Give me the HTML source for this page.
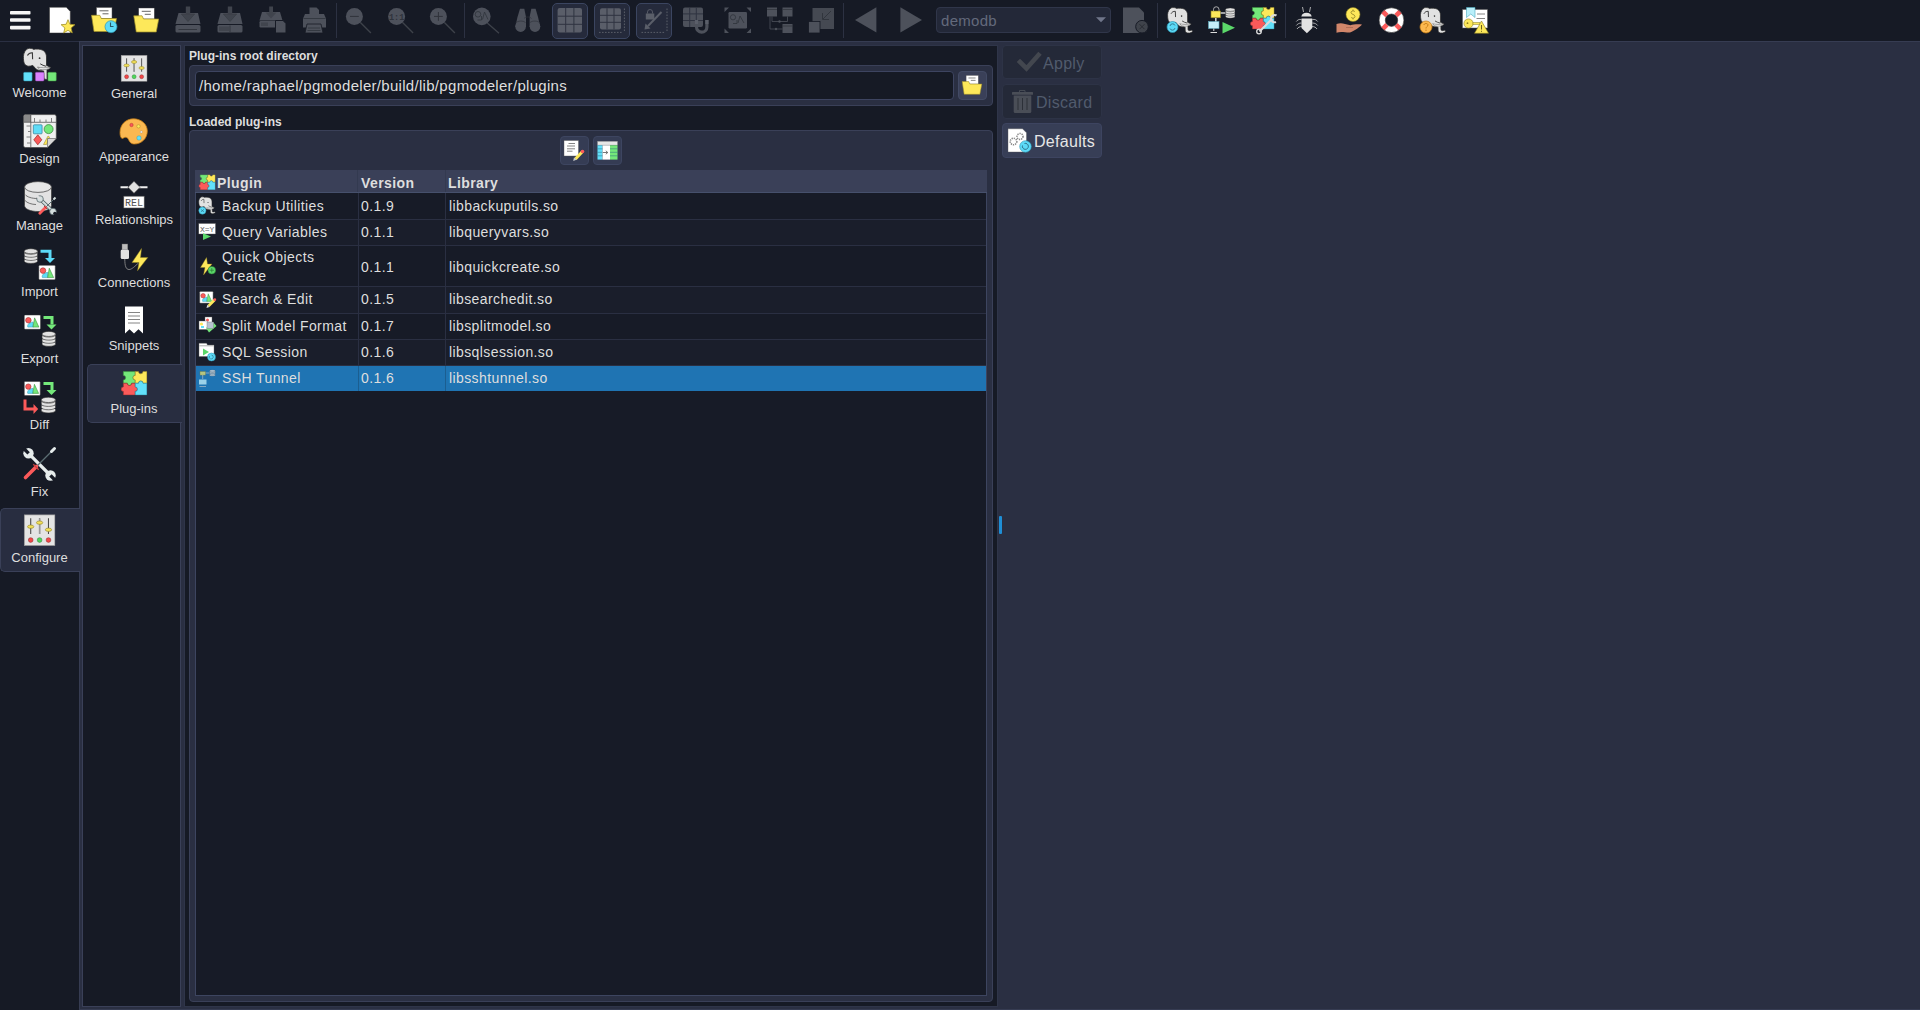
<!DOCTYPE html>
<html><head><meta charset="utf-8">
<style>
*{margin:0;padding:0;box-sizing:border-box}
html,body{width:1920px;height:1010px;overflow:hidden;background:#2a2f42;font-family:"Liberation Sans",sans-serif;color:#dedede}
.a{position:absolute}
#tb{left:0;top:0;width:1920px;height:41px;background:#161a25}
#tbline{left:79px;top:41px;width:1841px;height:1px;background:#363c52}
#side{left:0;top:42px;width:79px;height:968px;background:#161a25}
#fl{left:79px;top:41px;width:1px;height:969px;background:#363c52}
#fb{left:79px;top:1009px;width:1841px;height:1px;background:#363c52}
.sep{width:1px;top:3px;height:35px;background:#2c3142}
.tbtn{top:3px;width:36px;height:36px;border:1px solid #3b4560;border-radius:5px;background:#252a3b}
.panel{background:#161a25;border:1px solid #3a4058}
.lbl{position:absolute;font-size:13px;white-space:nowrap;text-align:center;line-height:14px}
.bold{font-weight:bold;font-size:12px;white-space:nowrap;position:absolute;line-height:14px}
.sel{background:#282d40;border:1px solid #3a4058}
.row{position:absolute;left:196px;width:790px;height:26px}
.cell{position:absolute;font-size:14px;white-space:nowrap;line-height:16px;letter-spacing:0.4px}
svg{position:absolute;overflow:visible}
</style></head><body>
<div id="tb" class="a"></div>
<div id="tbline" class="a"></div>
<div id="side" class="a"></div>
<div id="fl" class="a"></div>
<div id="fb" class="a"></div>

<!-- toolbar separators -->
<div class="a sep" style="left:336px"></div>
<div class="a sep" style="left:464px"></div>
<div class="a sep" style="left:843px"></div>
<div class="a sep" style="left:1157px"></div>
<div class="a sep" style="left:1285px"></div>
<div class="a tbtn" style="left:552px"></div>
<div class="a tbtn" style="left:594px"></div>
<div class="a tbtn" style="left:636px"></div>

<!-- combo -->
<div class="a" style="left:936px;top:7px;width:175px;height:26px;border:1px solid #30364a;border-radius:4px;background:#232838"></div>
<div class="a" style="left:941px;top:12px;font-size:15px;line-height:17px;color:#636a7c;letter-spacing:0.3px">demodb</div>

<!-- sidebar selected -->
<div class="a sel" style="left:0;top:508px;width:80px;height:64px;border-right:none;border-radius:5px 0 0 5px"></div>

<!-- category panel -->
<div class="a panel" style="left:82px;top:45px;width:99px;height:962px"></div>
<div class="a sel" style="left:87px;top:364px;width:95px;height:59px;border-right:none;border-radius:5px 0 0 5px"></div>

<!-- main panel -->
<div class="a panel" style="left:184px;top:45px;width:814px;height:962px;border-color:#2f3549"></div>

<!-- sidebar labels -->
<div class="lbl" style="left:0;width:79px;top:86px">Welcome</div>
<div class="lbl" style="left:0;width:79px;top:152px">Design</div>
<div class="lbl" style="left:0;width:79px;top:219px">Manage</div>
<div class="lbl" style="left:0;width:79px;top:285px">Import</div>
<div class="lbl" style="left:0;width:79px;top:352px">Export</div>
<div class="lbl" style="left:0;width:79px;top:418px">Diff</div>
<div class="lbl" style="left:0;width:79px;top:485px">Fix</div>
<div class="lbl" style="left:0;width:79px;top:551px">Configure</div>

<!-- category labels -->
<div class="lbl" style="left:83px;width:102px;top:87px">General</div>
<div class="lbl" style="left:83px;width:102px;top:150px">Appearance</div>
<div class="lbl" style="left:83px;width:102px;top:213px">Relationships</div>
<div class="lbl" style="left:83px;width:102px;top:276px">Connections</div>
<div class="lbl" style="left:83px;width:102px;top:339px">Snippets</div>
<div class="lbl" style="left:83px;width:102px;top:402px">Plug-ins</div>

<div class="bold" style="left:189px;top:49px">Plug-ins root directory</div>
<div class="bold" style="left:189px;top:115px">Loaded plug-ins</div>

<!-- root dir group -->
<div class="a" style="left:189px;top:65px;width:804px;height:41px;background:#2a2f42;border:1px solid #3a4058;border-radius:4px"></div>
<div class="a" style="left:195px;top:71px;width:759px;height:29px;background:#161a25;border:1px solid #3d4460;border-radius:4px"></div>
<div class="cell" style="left:199px;top:78px;font-size:15px;letter-spacing:0.3px">/home/raphael/pgmodeler/build/lib/pgmodeler/plugins</div>
<div class="a" style="left:958px;top:71px;width:29px;height:29px;background:#3a4058;border:1px solid #424a64;border-radius:4px"></div>

<!-- loaded plugins group -->
<div class="a" style="left:189px;top:130px;width:804px;height:872px;background:#2a2f42;border:1px solid #3a4058;border-radius:4px"></div>
<div class="a" style="left:560px;top:136px;width:29px;height:29px;background:#353c54;border:1px solid #3d4560;border-radius:4px"></div>
<div class="a" style="left:593px;top:136px;width:29px;height:29px;background:#353c54;border:1px solid #3d4560;border-radius:4px"></div>

<!-- table -->
<div class="a" style="left:195px;top:170px;width:792px;height:826px;background:#171b27;border:1px solid #3d4560;border-top:none"></div>
<div class="a" style="left:195px;top:170px;width:792px;height:23px;background:#3a4058;border-bottom:1px solid #46506c"></div>
<div class="a" style="left:357px;top:170px;width:1px;height:22px;background:#333a50"></div>
<div class="a" style="left:445px;top:170px;width:1px;height:22px;background:#333a50"></div>
<div class="cell" style="left:217px;top:175px;font-weight:bold">Plugin</div>
<div class="cell" style="left:361px;top:175px;font-weight:bold">Version</div>
<div class="cell" style="left:448px;top:175px;font-weight:bold">Library</div>

<div class="a" style="left:196px;top:193px;width:790px;height:26px;background:#171b27"></div>
<div class="a" style="left:196px;top:219px;width:790px;height:1px;background:#2a2f42"></div>
<div class="a" style="left:196px;top:220px;width:790px;height:25px;background:#1a1e2b"></div>
<div class="a" style="left:196px;top:245px;width:790px;height:1px;background:#2a2f42"></div>
<div class="a" style="left:196px;top:246px;width:790px;height:40px;background:#171b27"></div>
<div class="a" style="left:196px;top:286px;width:790px;height:1px;background:#2a2f42"></div>
<div class="a" style="left:196px;top:287px;width:790px;height:26px;background:#1a1e2b"></div>
<div class="a" style="left:196px;top:313px;width:790px;height:1px;background:#2a2f42"></div>
<div class="a" style="left:196px;top:314px;width:790px;height:25px;background:#171b27"></div>
<div class="a" style="left:196px;top:339px;width:790px;height:1px;background:#2a2f42"></div>
<div class="a" style="left:196px;top:340px;width:790px;height:25px;background:#1a1e2b"></div>
<div class="a" style="left:196px;top:365px;width:790px;height:1px;background:#2a2f42"></div>
<div class="a" style="left:196px;top:366px;width:790px;height:25px;background:#1f74b3"></div>
<div class="a" style="left:358px;top:193px;width:1px;height:172px;background:#2a2f42"></div>
<div class="a" style="left:445px;top:193px;width:1px;height:172px;background:#2a2f42"></div>
<div class="a" style="left:358px;top:366px;width:1px;height:25px;background:#1b5e90"></div>
<div class="a" style="left:445px;top:366px;width:1px;height:25px;background:#1b5e90"></div>

<div class="cell" style="left:222px;top:198px">Backup Utilities</div>
<div class="cell" style="left:361px;top:198px">0.1.9</div>
<div class="cell" style="left:449px;top:198px">libbackuputils.so</div>
<div class="cell" style="left:222px;top:224px">Query Variables</div>
<div class="cell" style="left:361px;top:224px">0.1.1</div>
<div class="cell" style="left:449px;top:224px">libqueryvars.so</div>
<div class="cell" style="left:222px;top:249px">Quick Objects</div>
<div class="cell" style="left:222px;top:268px">Create</div>
<div class="cell" style="left:361px;top:259px">0.1.1</div>
<div class="cell" style="left:449px;top:259px">libquickcreate.so</div>
<div class="cell" style="left:222px;top:291px">Search &amp; Edit</div>
<div class="cell" style="left:361px;top:291px">0.1.5</div>
<div class="cell" style="left:449px;top:291px">libsearchedit.so</div>
<div class="cell" style="left:222px;top:318px">Split Model Format</div>
<div class="cell" style="left:361px;top:318px">0.1.7</div>
<div class="cell" style="left:449px;top:318px">libsplitmodel.so</div>
<div class="cell" style="left:222px;top:344px">SQL Session</div>
<div class="cell" style="left:361px;top:344px">0.1.6</div>
<div class="cell" style="left:449px;top:344px">libsqlsession.so</div>
<div class="cell" style="left:222px;top:370px">SSH Tunnel</div>
<div class="cell" style="left:361px;top:370px">0.1.6</div>
<div class="cell" style="left:449px;top:370px">libsshtunnel.so</div>

<div class="a" style="left:999px;top:516px;width:3px;height:18px;background:#1f8fd6;border-radius:1px"></div>
<!-- right buttons -->
<div class="a" style="left:1002px;top:45px;width:100px;height:34px;background:#242938;border:1px solid #2d3346;border-radius:4px"></div>
<div class="a" style="left:1043px;top:55px;font-size:16px;line-height:18px;color:#515b6d;letter-spacing:0.3px">Apply</div>
<div class="a" style="left:1002px;top:84px;width:100px;height:35px;background:#242938;border:1px solid #2d3346;border-radius:4px"></div>
<div class="a" style="left:1036px;top:94px;font-size:16px;line-height:18px;color:#515b6d;letter-spacing:0.3px">Discard</div>
<div class="a" style="left:1002px;top:123px;width:100px;height:35px;background:#373e56;border:1px solid #3d4460;border-radius:4px"></div>
<div class="a" style="left:1034px;top:133px;font-size:16px;line-height:18px;color:#e6e6e6;letter-spacing:0.3px">Defaults</div>
<svg id="ov" style="position:absolute;left:0;top:0" width="1920" height="1010" viewBox="0 0 1920 1010">
<defs>
<symbol id="puzzle" viewBox="4.6 5 27.1 24.7">
<path d="M7.3,5.4H19.4V9.3A2.3,2.3 0 0 0 19.4,13.9V17.3H15.8A2.3,2.3 0 0 1 11.2,17.3H7.3V13.9A2.3,2.3 0 0 0 7.3,9.3Z" fill="#74e87a" stroke="#3a8f3c" stroke-width="0.6"/>
<path d="M19.4,5.4H22.7A2.3,2.3 0 0 0 27.3,5.4H31.3V17.3H27.3A2.3,2.3 0 0 0 22.7,17.3H19.4V13.9A2.3,2.3 0 0 1 19.4,9.3Z" fill="#fde85a" stroke="#9c8d2a" stroke-width="0.6"/>
<path d="M7.3,17.3H11.2A2.3,2.3 0 0 0 15.8,17.3H19.4V21A2.3,2.3 0 0 1 19.4,25.6V29.3H7.3V25.6A2.3,2.3 0 0 1 7.3,21Z" fill="#fb5a5a" stroke="#9c3030" stroke-width="0.6"/>
<path d="M19.4,17.3H22.7A2.3,2.3 0 0 1 27.3,17.3H31.3V29.3H19.4V25.6A2.3,2.3 0 0 0 19.4,21Z" fill="#62e0fa" stroke="#2f8ea5" stroke-width="0.6"/>
</symbol>
<symbol id="sliders" viewBox="0 0 32 32">
<rect x="0.5" y="0.5" width="31" height="31" fill="#e4e4e4" stroke="#9a9a9a" stroke-width="0.8"/>
<path d="M7,4V20M16,4V20M25,4V20" stroke="#4a4a4a" stroke-width="1.1"/>
<path d="M16,4V20" stroke="#9a9a9a" stroke-width="1.6"/>
<ellipse cx="7" cy="12.5" rx="3.2" ry="1.7" fill="#f2e05a" stroke="#8e7f22" stroke-width="0.6"/>
<ellipse cx="16" cy="8.4" rx="3.2" ry="1.7" fill="#f2e05a" stroke="#8e7f22" stroke-width="0.6"/>
<ellipse cx="25" cy="15.6" rx="3.2" ry="1.7" fill="#f2e05a" stroke="#8e7f22" stroke-width="0.6"/>
<circle cx="7" cy="26" r="2.4" fill="#f04848" stroke="#8a2525" stroke-width="0.5"/>
<circle cx="16" cy="26" r="2.4" fill="#4fd65a" stroke="#2a7a30" stroke-width="0.5"/>
<circle cx="25" cy="26" r="2.4" fill="#f04848" stroke="#8a2525" stroke-width="0.5"/>
</symbol>
<symbol id="eleph" viewBox="0 0 44 44">
<path d="M5.4,12.6C5.5,9 7.5,5.5 10,4.6C12,4 14.5,4.5 15.7,5.4C18,4.8 22.5,5 25,6.3C27.5,7.8 28.5,10.5 28.5,13V21.4L32.7,23.4C31.5,25 30,25.5 29,25.6V35.7L26.1,34.9L25.7,27C24,27 22.5,26.8 21.8,26.6C20,26.3 18.5,25.5 17.5,24.5L14.8,21.4C13,22 11.5,22.3 10.5,22.2C8.5,22 7,21 6.2,19.2C5.6,17.5 5.4,15 5.4,12.6Z" fill="#e2e2e2" stroke="#2a2a2a" stroke-width="0.8"/>
<path d="M9.4,11.5C10.5,9.5 12,8.5 14.4,8.7L14.6,15.3" fill="none" stroke="#3a3a3a" stroke-width="1.1"/>
<circle cx="21.6" cy="14.2" r="0.9" fill="#333"/>
<path d="M22.2,19.8C24,21 26,21.8 28.2,22.3" fill="none" stroke="#3a3a3a" stroke-width="1"/>
<path d="M19.5,23C23,24.2 28,24 32.7,23.4C30.5,25.6 26,26.3 21.5,25.3Z" fill="#ffffff" stroke="#3a3a3a" stroke-width="0.5"/>
</symbol>
<symbol id="eleph2" viewBox="0 0 44 44">
<path d="M5.4,12.6C5.5,9 7.5,5.5 10,4.6C12,4 14.5,4.5 15.7,5.4C18,4.8 22.5,5 25,6.3C27.5,7.8 28.5,10.5 28.5,13V21.4L32.7,23.4C31.5,25 30,25.5 29,25.6V29.5C29,31 30.5,31.5 33,30.5L34.5,31.5C33,34 29,34.5 26.8,33C25.8,32 25.7,30.5 25.7,27C24,27 22.5,26.8 21.8,26.6C20,26.3 18.5,25.5 17.5,24.5L14.8,21.4C13,22 11.5,22.3 10.5,22.2C8.5,22 7,21 6.2,19.2C5.6,17.5 5.4,15 5.4,12.6Z" fill="#e2e2e2" stroke="#2a2a2a" stroke-width="0.8"/>
<path d="M9.4,11.5C10.5,9.5 12,8.5 14.4,8.7L14.6,15.3" fill="none" stroke="#3a3a3a" stroke-width="1.1"/>
<circle cx="21.6" cy="14.2" r="0.9" fill="#333"/>
<path d="M22.2,19.8C24,21 26,21.8 28.2,22.3" fill="none" stroke="#3a3a3a" stroke-width="1"/>
<path d="M19.5,23C23,24.2 28,24 32.7,23.4C30.5,25.6 26,26.3 21.5,25.3Z" fill="#ffffff" stroke="#3a3a3a" stroke-width="0.5"/>
</symbol>
<symbol id="db" viewBox="0 0 16 17">
<g fill="#e2e2e2" stroke="#3a3a3a" stroke-width="0.7">
<path d="M0.8,12.5V14C0.8,15.5 4,16.5 8,16.5S15.2,15.5 15.2,14V12.5"/>
<path d="M0.8,9V10.8C0.8,12.3 4,13.3 8,13.3S15.2,12.3 15.2,10.8V9"/>
<path d="M0.8,5.5V7.4C0.8,8.9 4,9.9 8,9.9S15.2,8.9 15.2,7.4V5.5"/>
<path d="M0.8,3.3V4.1C0.8,5.6 4,6.6 8,6.6S15.2,5.6 15.2,4.1V3.3"/>
<ellipse cx="8" cy="3.3" rx="7.2" ry="2.7"/>
</g>
</symbol>
<symbol id="pic" viewBox="0 0 18 16">
<rect x="0.5" y="0.5" width="17" height="15" rx="1" fill="#ffffff" stroke="#444" stroke-width="0.6"/>
<path d="M9.8,7.8V13.2H4.2C3.6,12.2 4,10.5 5.5,9.3C6.8,8.3 8.5,7.9 9.8,7.8Z" fill="#5fdcf7" stroke="#2f8ea5" stroke-width="0.5"/>
<circle cx="4.8" cy="6" r="2.9" fill="#fb5a5a" stroke="#9c2e2e" stroke-width="0.6"/>
<path d="M11.3,3.5L15.8,13.2H9.6Z" fill="#74e87a" stroke="#3a8f3c" stroke-width="0.6" stroke-linejoin="round"/>
</symbol>
<symbol id="folder" viewBox="0 0 26 26">
<rect x="5.5" y="0.5" width="15.5" height="11" fill="#fff" stroke="#555" stroke-width="0.5"/>
<path d="M8.5,3.8H17.5M11.5,6.8H17.5" stroke="#666" stroke-width="1"/>
<path d="M0.5,8.3H8.8L10.3,11.5H25.5L23,24.5H3Z" fill="#fde85a" stroke="#9c8d2a" stroke-width="0.7"/>
</symbol>
</defs>

<rect x="10" y="11" width="20.5" height="3.6" rx="0.8" fill="#f6f6f6"/>
<rect x="10" y="18.2" width="20.5" height="3.6" rx="0.8" fill="#f6f6f6"/>
<rect x="10" y="25.8" width="20.5" height="3.6" rx="0.8" fill="#f6f6f6"/>
<path d="M49.5,7.3H66.3L70.3,11.5V33H49.5Z" fill="#ffffff" stroke="#333" stroke-width="0.5"/>
<polygon points="68.0,19.7 69.9,24.3 74.9,24.7 71.1,28.0 72.3,32.9 68.0,30.3 63.7,32.9 64.9,28.0 61.1,24.7 66.1,24.3" fill="#fde85a" stroke="#a39227" stroke-width="0.8"/>
<use href="#folder" x="91" y="7" width="26" height="26"/>
<circle cx="111" cy="26.7" r="6" fill="#5cdaf7" stroke="#2c93b0" stroke-width="0.7"/><path d="M110.5,22.5V26.5H113.5" fill="none" stroke="#2a5a6a" stroke-width="1.1"/>
<use href="#folder" x="133" y="7.5" width="26.5" height="26"/>
<path d="M178.5,13H198.0L200.5,24H175.5Z" fill="#4d515b"/>
<rect x="175.5" y="25" width="25" height="7.6" rx="1.5" fill="#4d515b"/>
<rect x="185.8" y="6.5" width="4.4" height="8" fill="#40444d"/>
<path d="M181.3,14H194.7L188.0,21.5Z" fill="#40444d" stroke="#363a42" stroke-width="0.6"/>
<path d="M178.5,29.5H197" stroke="#2f333b" stroke-width="0.9"/>
<path d="M220.5,13H240.0L242.5,24H217.5Z" fill="#4d515b"/>
<rect x="217.5" y="25" width="25" height="7.6" rx="1.5" fill="#4d515b"/>
<rect x="227.8" y="6.5" width="4.4" height="8" fill="#40444d"/>
<path d="M223.3,14H236.7L230.0,21.5Z" fill="#40444d" stroke="#363a42" stroke-width="0.6"/>
<rect x="219" y="26.5" width="10" height="4.5" fill="#41454e"/><path d="M230,25.5V32" stroke="#2f333b" stroke-width="0.9"/>
<path d="M262,12H280L282.5,20.5H259.5Z" fill="#4d515b"/><rect x="259.5" y="21" width="23" height="6.5" rx="1.2" fill="#4d515b"/>
<rect x="269.2" y="6.5" width="3.8" height="7" fill="#40444d"/><path d="M265.5,12.5H276.5L271,18.5Z" fill="#40444d"/>
<rect x="261" y="22.5" width="7" height="3.5" fill="#41454e"/>
<path d="M275.5,20.5H283L286,23.5V33H275.5Z" fill="#4d515b" stroke="#161a25" stroke-width="1"/>
<path d="M309.5,7.5H316.5L319,10V14.5H309.5Z" fill="#4d515b"/><path d="M305,14H324L326,18.5V27.5H303V18.5Z" fill="#4d515b"/><path d="M307,24H321L323,33H305Z" fill="#4d515b" stroke="#161a25" stroke-width="0.8"/>
<path d="M303.5,18.5H325.5M308,28H320M307.5,30.5H320.5" stroke="#2f333b" stroke-width="0.8"/>
<path d="M360.4,22.5L370.9,33" stroke="#3e424a" stroke-width="1.3"/>
<circle cx="354.4" cy="16.4" r="8.5" fill="#4d515b"/>
<path d="M350,16.4H358.8" stroke="#2f333b" stroke-width="1"/>
<path d="M402.6,22.5L413.1,33" stroke="#3e424a" stroke-width="1.3"/>
<circle cx="396.6" cy="16.4" r="8.5" fill="#4d515b"/>
<text x="396.6" y="19.8" font-family="Liberation Mono" font-weight="bold" font-size="8.5" text-anchor="middle" fill="#2f333b">1:1</text>
<path d="M444.4,22.5L454.9,33" stroke="#3e424a" stroke-width="1.3"/>
<circle cx="438.4" cy="16.4" r="8.5" fill="#4d515b"/>
<path d="M434,16.4H442.8M438.4,12V20.8" stroke="#2f333b" stroke-width="1"/>
<path d="M487,22.8L499,33.3" stroke="#3e424a" stroke-width="1.3"/><circle cx="481.8" cy="16.4" r="8.8" fill="#4d515b"/>
<circle cx="478" cy="14.3" r="2.8" fill="none" stroke="#2f333b" stroke-width="0.8"/><path d="M477.5,20H481.5V16M482.5,19.5L484.5,12L488,19.5" fill="none" stroke="#2f333b" stroke-width="0.8"/>
<path d="M520,8.7H524.3L526,17V27H515.3L517.5,17Z" fill="#4d515b"/><path d="M531.3,8.7H535.6L538,17L540.3,27H529.6V17Z" fill="#4d515b"/>
<circle cx="520.6" cy="26.6" r="5.3" fill="#4d515b"/><circle cx="535" cy="26.6" r="5.3" fill="#4d515b"/><path d="M515.5,23C518,20.5 523,20.5 525.5,22.5M530,22.5C532.5,20.5 537.5,20.5 540,23M524,18.5C525.5,16.5 530,16.5 531.5,18.5" fill="none" stroke="#30343c" stroke-width="0.7"/>
<rect x="557.6" y="8" width="24.4" height="24.5" rx="2" fill="#5a5e69"/>
<path d="M565.7,8V32.5M557.6,16.2H582.0" stroke="#2f3340" stroke-width="1"/>
<path d="M573.9,8V32.5M557.6,24.3H582.0" stroke="#2f3340" stroke-width="1"/>
<rect x="600" y="8.2" width="21" height="21.2" rx="2" fill="#5a5e69"/>
<path d="M607.0,8.2V29.4M600,15.3H621" stroke="#2f3340" stroke-width="1"/>
<path d="M614.0,8.2V29.4M600,22.3H621" stroke="#2f3340" stroke-width="1"/>
<path d="M599,32.4H622.5M624.4,8.5V31" stroke="#5a5e69" stroke-width="1" stroke-dasharray="1.6,1.4"/>
<path d="M641.5,32.4H665M667,8.5V31" stroke="#5a5e69" stroke-width="1" stroke-dasharray="1.6,1.4"/>
<path d="M647.5,13.5V12A2.5,2.5 0 0 1 652.5,12V13.5" fill="none" stroke="#5a5e69" stroke-width="0.9"/><rect x="645.8" y="13.5" width="8.5" height="6" fill="#5a5e69"/>
<path d="M661.5,12L648,26" stroke="#5a5e69" stroke-width="2"/><path d="M644.5,29.5L645.5,23.5L650.5,28.5Z" fill="#5a5e69"/>
<rect x="683" y="7.4" width="20" height="19.6" rx="2" fill="#4d515b"/>
<path d="M689.7,7.4V27.0M683,13.9H703" stroke="#2f3340" stroke-width="1"/>
<path d="M696.3,7.4V27.0M683,20.5H703" stroke="#2f3340" stroke-width="1"/>
<path d="M696.5,20V27A5.2,5.2 0 0 0 706.9,27V20" fill="none" stroke="#4d515b" stroke-width="3.2"/><path d="M696.5,20V24M706.9,20V24" stroke="#5a5e69" stroke-width="3.2"/>
<rect x="728.5" y="12" width="18.5" height="16.5" rx="1.2" fill="#4d515b"/><circle cx="733" cy="17.3" r="2.6" fill="none" stroke="#2f333b" stroke-width="0.8"/><path d="M733,23.5H737V20M738,23L740,16L744,23" fill="none" stroke="#2f333b" stroke-width="0.8"/>
<path d="M724.5,7.5H729L724.5,12Z M751,7.5H746.5L751,12Z M724.5,33H729L724.5,28.5Z M751,33H746.5L751,28.5Z" fill="#4d515b"/>
<rect x="767" y="7.5" width="10" height="9" fill="#4d515b"/><rect x="782.5" y="7.5" width="10" height="9" fill="#4d515b"/><rect x="782.5" y="24" width="10" height="9" fill="#4d515b"/>
<path d="M767,9.5H777M782.5,9.5H792.5M782.5,26H792.5" stroke="#2f333b" stroke-width="0.7"/><path d="M772,16.5V21.5H787.5V16.5M770,16.5V29H782.5" fill="none" stroke="#4d515b" stroke-width="0.8"/><circle cx="779.5" cy="21.5" r="1.2" fill="#4d515b"/><circle cx="776" cy="29" r="1.2" fill="#4d515b"/>
<rect x="812.5" y="8" width="21.5" height="21" fill="#454952"/><rect x="808.5" y="21.5" width="11.5" height="11.5" fill="#4d515b" stroke="#161a25" stroke-width="0.8"/><path d="M831,11L823,19M822.5,13V19.5H829" fill="none" stroke="#2f333b" stroke-width="0.9"/>
<polygon points="876.4,7.2 876.4,32.6 855,19.9" fill="#4d515b"/><polygon points="900.4,7.2 900.4,32.6 922,19.9" fill="#4d515b"/>
<polygon points="1096,17.2 1106,17.2 1101,22.3" fill="#70768a"/>
<path d="M1123,7.5H1139L1144,12.5V33H1123Z" fill="#4d515b"/><circle cx="1142" cy="26.7" r="6.3" fill="#3f434b" stroke="#161a25" stroke-width="1"/><path d="M1139.5,24.2L1144.5,29.2M1144.5,24.2L1139.5,29.2" stroke="#262930" stroke-width="0.9"/>
<use href="#eleph2" x="1162.9" y="3.8" width="38.1" height="38.1"/>
<circle cx="1172.5" cy="27" r="5.5" fill="#5cdaf7" stroke="#2c93b0" stroke-width="0.7"/><path d="M1170,26A2.6,2.6 0 0 1 1175,25.5M1175,28A2.6,2.6 0 0 1 1170,28.5" fill="none" stroke="#2a6a80" stroke-width="0.8"/>
<path d="M1213.5,11V9.5A2.7,2.7 0 0 1 1219,9.5V11" fill="none" stroke="#bbb" stroke-width="0.9"/><rect x="1211" y="11" width="9.5" height="6.8" fill="#fde85a" stroke="#8a7c22" stroke-width="0.6"/>
<path d="M1220.5,13H1225.5M1215.8,18V22" stroke="#cfcfcf" stroke-width="1.6"/>
<use href="#db" x="1225" y="7.5" width="10.5" height="11"/>
<rect x="1208.5" y="21.5" width="10.5" height="7" fill="#c5f0fb" stroke="#5aa9bd" stroke-width="0.6"/><path d="M1213.8,28.5V31M1210.5,32.5H1217" stroke="#dcdcdc" stroke-width="1"/>
<polygon points="1222.5,22 1222.5,33.5 1235,27.7" fill="#5bd86a"/>
<use href="#puzzle" x="1250" y="7" width="24.5" height="22.5"/>
<path d="M1259.5,31.5L1272,19" stroke="#dcdcdc" stroke-width="2.2"/><circle cx="1259" cy="31.5" r="2.3" fill="none" stroke="#dcdcdc" stroke-width="1.3"/><path d="M1276.5,15.5A3.6,3.6 0 1 0 1276,22" fill="none" stroke="#dcdcdc" stroke-width="2.2"/>
<path d="M1302.5,7L1303.5,12M1310.5,7L1309.5,12" stroke="#cfcfcf" stroke-width="0.8"/>
<path d="M1301.3,16.5A5.3,4.5 0 0 1 1311.7,16.5Z" fill="#e2e2e2"/>
<path d="M1301.5,18.5H1312.3V28L1306.9,33.3L1301.5,28Z" fill="#e2e2e2"/>
<path d="M1301.5,19.5C1299,19 1297.5,20 1296.3,21.5M1301.5,23C1299,23 1297.5,24 1296.3,25.5M1302,26.5C1299.5,26.5 1298,27.5 1297,29M1312.3,19.5C1315,19 1316.5,20 1317.7,21.5M1312.3,23C1315,23 1316.5,24 1317.7,25.5M1311.8,26.5C1314.5,26.5 1316,27.5 1317,29" fill="none" stroke="#cfcfcf" stroke-width="0.8"/>
<circle cx="1353" cy="14.5" r="7" fill="#fde85a" stroke="#8a7c22" stroke-width="0.6"/><path d="M1354.8,11.5C1353.5,10.5 1351,10.8 1351,12.7C1351,14.5 1355,14.2 1355,16.5C1355,18.3 1352.5,18.6 1351.2,17.5M1353,9.5V10.8M1353,18.2V19.5" fill="none" stroke="#8a7c22" stroke-width="0.8"/>
<path d="M1336.5,24C1339,23 1342,22.8 1345,24L1350.5,25.3C1353,24.5 1357,24 1362,24.5C1360,27 1355,30.5 1350,32.5C1346,32.8 1341,31 1336.5,32.8Z" fill="#d1866a"/>
<path d="M1346,27.5H1353" stroke="#a86850" stroke-width="0.8"/>
<circle cx="1391.5" cy="20.2" r="9.3" fill="none" stroke="#ffffff" stroke-width="6.2"/>
<path d="M1396.0,24.7L1400.2,28.9M1387.0,24.7L1382.8,28.9M1387.0,15.7L1382.8,11.5M1396.0,15.7L1400.2,11.5" stroke="#fb5a5a" stroke-width="4.6"/>
<circle cx="1391.5" cy="20.2" r="12.4" fill="none" stroke="#2e2e2e" stroke-width="0.6"/><circle cx="1391.5" cy="20.2" r="6.2" fill="none" stroke="#2e2e2e" stroke-width="0.6"/>
<use href="#eleph2" x="1415.8" y="3.8" width="38.1" height="38.1"/>
<circle cx="1426" cy="27" r="6" fill="#fcb84e" stroke="#c47d16" stroke-width="0.7"/><path d="M1424,25C1424,23 1428,23 1428,25C1428,26.5 1426,26.5 1426,28.5" fill="none" stroke="#c47d16" stroke-width="1"/><circle cx="1426" cy="30.2" r="0.7" fill="#c47d16"/>
<rect x="1462.5" y="9.5" width="25" height="18.5" fill="#ffffff" stroke="#555" stroke-width="0.5"/>
<path d="M1466.5,7.5H1475V17.5L1470.8,14L1466.5,17.5Z" fill="#b9effa" stroke="#4aaac0" stroke-width="0.6"/>
<path d="M1477,14H1485M1476.5,18.5H1485" stroke="#777" stroke-width="0.9"/>
<circle cx="1468.5" cy="23.5" r="4.6" fill="#fde85a" stroke="#8a7c22" stroke-width="0.6"/><path d="M1473,22.5H1480V24.5H1473Z" fill="#fde85a" stroke="#8a7c22" stroke-width="0.5"/><circle cx="1467.5" cy="23.2" r="0.9" fill="#8a7c22"/>
<path d="M1481.5,21L1488.5,33.3H1474.5Z" fill="#fde85a" stroke="#8a7c22" stroke-width="0.6"/><path d="M1481.5,25V29.5M1481.5,30.8V31.8" stroke="#5a5016" stroke-width="0.9"/>
<use href="#eleph" x="18" y="44" width="44" height="44"/>
<rect x="23.6" y="72.3" width="8.5" height="8.7" rx="1" fill="#62e0fa" stroke="#2f8ea5" stroke-width="0.5"/>
<rect x="35.4" y="72.3" width="8.6" height="8.7" rx="1" fill="#d982fd" stroke="#8f46ab" stroke-width="0.5"/>
<rect x="47.9" y="72.3" width="8.4" height="8.7" rx="1" fill="#74e87a" stroke="#3a8f3c" stroke-width="0.5"/>
<path d="M23.5,116.5A2,2 0 0 1 25.5,114.6H54.3A2,2 0 0 1 56.3,116.5V138.5L47.5,147.6H25.5A2,2 0 0 1 23.5,145.6Z" fill="#f0f0f0" stroke="#444" stroke-width="0.7"/>
<rect x="24" y="115" width="7" height="7" fill="#8a8a8a"/><path d="M30.8,115V147.3M24,122.3H56" stroke="#555" stroke-width="0.8"/>
<path d="M34.5,118V122M40,119.5V122M46,119.5V122M51.5,118V122M26.5,126H30.5M28,131.5H30.5M26.5,137H30.5M27,143H30.5" stroke="#666" stroke-width="0.8"/>
<rect x="33.3" y="124.8" width="8.8" height="9" rx="0.8" fill="#5fdcf7" stroke="#2f7e95" stroke-width="0.7"/>
<circle cx="48.6" cy="129.1" r="4.5" fill="#74e87a" stroke="#2f7e34" stroke-width="0.7"/>
<path d="M37.8,134.8L41.8,139.8L37.8,144.8L33.8,139.8Z" fill="#fb5a5a" stroke="#922" stroke-width="0.7"/>
<path d="M43.5,144.5L48,136L49.5,137L46.5,144.5Z" fill="#fde85a" stroke="#8a7c22" stroke-width="0.5"/>
<path d="M47.5,138.5H56.3L47.5,147.6Z" fill="#d8d8d8" stroke="#555" stroke-width="0.6"/>
<path d="M24.5,187V205.5C24.5,209 30.5,211.5 38,211.5S51.5,209 51.5,205.5V187" fill="#e2e2e2" stroke="#3a3a3a" stroke-width="0.7"/>
<ellipse cx="38" cy="187" rx="13.5" ry="5.4" fill="#e6e6e6" stroke="#3a3a3a" stroke-width="0.7"/>
<path d="M25,194.5C27,197 32,198.5 37,198.5M25,200.5C27,203 32,204.5 36,204.5" fill="none" stroke="#555" stroke-width="0.8"/>
<path d="M41.5,200.5L51.5,210" stroke="#4a5a5e" stroke-width="3.6"/><path d="M41.5,200.5L51.5,210" stroke="#d4dede" stroke-width="2"/>
<circle cx="40" cy="199" r="3.3" fill="#d4dede" stroke="#4a5a5e" stroke-width="0.7"/><path d="M40,199L37,196" stroke="#e2e2e2" stroke-width="2.4"/>
<circle cx="53" cy="211.5" r="3.3" fill="#d4dede" stroke="#4a5a5e" stroke-width="0.7"/><circle cx="54.8" cy="213.3" r="1.6" fill="#161a25"/>
<path d="M54.5,198.5L45,208" stroke="#5b6e73" stroke-width="1"/><path d="M53.5,199.5L55.5,197.5" stroke="#d4dede" stroke-width="2"/>
<path d="M45.5,207.5L39.8,213.3" stroke="#fb5a5a" stroke-width="2.8" stroke-linecap="round"/><path d="M44,206L47,209" stroke="#b83a3a" stroke-width="1"/>
<use href="#db" x="23.5" y="247.8" width="14.8" height="16.4"/>
<path d="M40.5,251.2H50V258" fill="none" stroke="#5cdaf7" stroke-width="3"/><polygon points="45,258 55,258 50,263" fill="#5cdaf7"/>
<use href="#pic" x="38.3" y="264.8" width="17.5" height="15.5"/>
<use href="#pic" x="23.8" y="314.5" width="17.2" height="15.3"/>
<path d="M43.5,317.5H52V324.5" fill="none" stroke="#74e87a" stroke-width="3"/><polygon points="46.5,324.5 56.5,324.5 51.5,329.5" fill="#74e87a"/>
<use href="#db" x="41.3" y="330.6" width="15" height="16.4"/>
<use href="#pic" x="23.5" y="381" width="17.5" height="15"/>
<path d="M43.5,383.5H52V390.5" fill="none" stroke="#74e87a" stroke-width="3"/><polygon points="46.5,390 56.5,390 51.5,395" fill="#74e87a"/>
<path d="M25,399.5V409H35" fill="none" stroke="#fb5a5a" stroke-width="3"/><polygon points="33.5,404 38.2,409 33.5,414" fill="#fb5a5a"/>
<use href="#db" x="40.5" y="396.5" width="15.8" height="17"/>
<path d="M28.5,453.3L50.5,475.5" stroke="#e6ecec" stroke-width="3.2"/>
<circle cx="28.5" cy="453.3" r="5.2" fill="#e6ecec"/><path d="M28.6,453.4L23.5,448.3" stroke="#161a25" stroke-width="3.4"/>
<circle cx="50.5" cy="475.5" r="5.2" fill="#e6ecec"/><path d="M50.4,475.4L55.5,480.5" stroke="#161a25" stroke-width="3.4"/>
<path d="M53,450L36,467" stroke="#5b6e73" stroke-width="1.2"/><path d="M51.5,451.5L54.5,448.5" stroke="#e6ecec" stroke-width="3" stroke-linecap="round"/>
<path d="M36.5,466.5L25.5,477.5" stroke="#fb5a5a" stroke-width="3.6" stroke-linecap="round"/><path d="M33.3,464.3L38.7,469.7" stroke="#c84040" stroke-width="1.3"/>
<use href="#sliders" x="23.8" y="514.3" width="31.6" height="31.7"/>
<use href="#sliders" x="120.7" y="55" width="26.8" height="26.7"/>
<path d="M133.5,118.8C141,118.8 147.3,124 147.3,131C147.3,138.5 141.5,144 134.5,144C130.5,144 129.5,141.5 128.5,139.5C127.5,137.5 125.5,136.5 123.5,138C121.5,139.5 120,137 120,132.5C120,124.5 126,118.8 133.5,118.8Z" fill="#fbb851" stroke="#c47d16" stroke-width="0.8"/>
<circle cx="131.5" cy="125" r="1.7" fill="#fb5a5a" stroke="#922" stroke-width="0.4"/><circle cx="138.5" cy="126.3" r="1.7" fill="#fde85a" stroke="#8a7c22" stroke-width="0.4"/><circle cx="141.3" cy="132" r="1.1" fill="#fff" stroke="#888" stroke-width="0.4"/><circle cx="139" cy="138" r="2.2" fill="#62e0fa" stroke="#2f8ea5" stroke-width="0.4"/>
<path d="M120.5,187.3H128M136,187.3H147.5" stroke="#eee" stroke-width="2" /><path d="M134,181.3L140,187.3L134,193.3L128,187.3Z" fill="#e2e2e2" stroke="#444" stroke-width="0.6"/>
<rect x="123.8" y="196.2" width="20.4" height="11.8" fill="#fff" stroke="#555" stroke-width="0.6"/><text x="134" y="206" font-family="Liberation Mono" font-size="10" text-anchor="middle" fill="#555">REL</text>
<rect x="122" y="244" width="5.8" height="5.5" fill="#bdbdbd" stroke="#666" stroke-width="0.4"/><rect x="120.7" y="249.5" width="8.3" height="9.5" rx="1.5" fill="#e2e2e2"/>
<path d="M124.8,259C124.8,266 126,269.5 129,269.5C132,269.5 135,266 138.5,263" fill="none" stroke="#888" stroke-width="0.9"/>
<polygon points="141.5,248.5 132,262.5 139,262.5 137.5,270.8 147.8,257.5 140.5,257.5" fill="#fde85a" stroke="#8a7c22" stroke-width="0.5"/>
<path d="M125,306.6H143V333.6L138.5,329.3L134,333.6L129.5,329.3L125,333.6Z" fill="#ffffff"/>
<path d="M128,312.5H140M128,316H140M128,319.5H140M128,323H140" stroke="#777" stroke-width="0.9"/>
<use href="#puzzle" x="120.7" y="371" width="26.6" height="24.6"/>
<use href="#folder" x="961.5" y="75" width="21" height="20.5"/>
<rect x="564" y="140.5" width="14.5" height="15.5" fill="#fff" stroke="#555" stroke-width="0.4"/><path d="M568.5,143.5H575M567,146H575M567,148.8H575M567,151.2H572.5" stroke="#666" stroke-width="0.8"/>
<path d="M575.5,159L582.5,151.5" stroke="#fde85a" stroke-width="3"/><circle cx="582.5" cy="151.5" r="1.8" fill="#fb5a5a"/><polygon points="573.2,161 574,157.5 576.5,159.8" fill="#ccc"/>
<rect x="597.5" y="141.3" width="20" height="3.8" fill="#e6e6e6" stroke="#888" stroke-width="0.4"/><rect x="597.5" y="145.3" width="5" height="14.3" fill="#62e0fa"/><rect x="602.5" y="145.3" width="7.5" height="14.3" fill="#fff"/><rect x="610" y="145.3" width="7.5" height="14.3" fill="#74e87a"/>
<path d="M597.5,148.8H602.5M597.5,152.3H602.5M597.5,155.8H602.5M610,148.8H617.5M610,152.3H617.5M610,155.8H617.5" stroke="#2a6a80" stroke-width="0.5"/><path d="M603,152.5H607.5M605.8,150.8L607.8,152.5L605.8,154.2" fill="none" stroke="#555" stroke-width="0.8"/>
<use href="#puzzle" x="198.5" y="174.5" width="17" height="15.5"/>
<use href="#eleph2" x="195.7" y="194.4" width="25.1" height="25.1"/>
<circle cx="202.4" cy="210.6" r="3.6" fill="#5cdaf7" stroke="#2c93b0" stroke-width="0.5"/><path d="M200.8,209.3L204,212M204,209.3L200.8,212" stroke="#2a6a80" stroke-width="0.6"/>
<rect x="198.8" y="223.5" width="16.7" height="10.5" fill="#fff" stroke="#555" stroke-width="0.4"/><text x="207.2" y="232" font-family="Liberation Mono" font-size="8" text-anchor="middle" fill="#666">X=Y</text>
<polygon points="203,233.3 203,240 211,236.6" fill="#5bd86a"/>
<polygon points="206.5,257.5 200.5,267.5 205,267.5 203.5,275 212,264 207.5,264" fill="#fde85a" stroke="#8a7c22" stroke-width="0.4"/>
<circle cx="211.8" cy="270.2" r="3.8" fill="#5bd86a" stroke="#2a7a30" stroke-width="0.5"/><path d="M209.6,270.2H214M211.8,268V272.4" stroke="#2a7a30" stroke-width="0.7"/>
<use href="#pic" x="198.9" y="291" width="15" height="12.6"/>
<path d="M208.5,306L214.5,300" stroke="#fde85a" stroke-width="2.6"/><circle cx="214.8" cy="299.7" r="1.4" fill="#fb5a5a"/><polygon points="206.5,308 207.3,304.8 209.5,307" fill="#ddd"/>
<rect x="205" y="317" width="7" height="9" fill="#fff" stroke="#666" stroke-width="0.4"/><circle cx="207.5" cy="320" r="1.5" fill="#fb5a5a"/>
<rect x="199" y="321" width="8.5" height="8.5" fill="#fff" stroke="#666" stroke-width="0.4"/><circle cx="201.5" cy="324" r="1.6" fill="#fde85a"/><rect x="201" y="326" width="3" height="2" fill="#62e0fa"/>
<path d="M209,332.5L216.5,326L213,322L206,328Z" fill="#74e87a"/><rect x="207" y="322" width="6.5" height="6.5" fill="#b8c2d0" stroke="#777" stroke-width="0.4"/>
<path d="M199,343.3H206.5L207.5,345H214V356.5H199Z" fill="#fff" stroke="#666" stroke-width="0.4"/><path d="M199.3,345.8H213.7" stroke="#999" stroke-width="0.8"/>
<polygon points="203,348.5 203,355.5 209,352" fill="#5bd86a"/>
<circle cx="211.5" cy="357" r="4" fill="#5cdaf7" stroke="#2c93b0" stroke-width="0.5"/><path d="M209.5,356A2,2 0 1 0 211.5,355" fill="none" stroke="#2a6a80" stroke-width="0.6"/>
<g opacity="0.75"><rect x="200" y="371.5" width="5.5" height="3.6" fill="#e8e070" stroke="#8a7c22" stroke-width="0.4"/><path d="M205.5,373H209.5M202.7,375V379" stroke="#ccc" stroke-width="0.8"/>
<use href="#db" x="209.2" y="369.5" width="6.5" height="7"/><rect x="199" y="379.5" width="7.5" height="5" fill="#c5f0fb"/><path d="M199.5,386.5H206" stroke="#ccc" stroke-width="0.8"/></g>
<path d="M1020,62L1026.5,68.5L1038.5,55" fill="none" stroke="#43474f" stroke-width="4.6" stroke-linecap="square"/>
<path d="M1019.5,92V90.5H1025V92" fill="none" stroke="#4a4e57" stroke-width="0.9"/><rect x="1012" y="92" width="21" height="2.8" rx="0.5" fill="#4a4e57"/>
<path d="M1013.7,95.5H1031.3V111.5A1.5,1.5 0 0 1 1029.8,113H1015.2A1.5,1.5 0 0 1 1013.7,111.5Z" fill="#4a4e57"/><path d="M1018,98V110M1022.5,98V110M1027,98V110" stroke="#2c3038" stroke-width="1"/>
<path d="M1008,128.8H1022.5L1026.5,132.8V152H1008Z" fill="#fff" stroke="#555" stroke-width="0.4"/>
<circle cx="1013.5" cy="141.5" r="3.3" fill="none" stroke="#888" stroke-width="1.6" stroke-dasharray="1.3,0.9"/><circle cx="1020" cy="136.5" r="3" fill="none" stroke="#888" stroke-width="1.6" stroke-dasharray="1.3,0.9"/>
<circle cx="1025.5" cy="146.5" r="5.8" fill="#5cdaf7" stroke="#2c93b0" stroke-width="0.6"/><path d="M1022.5,145.5A3,3 0 1 0 1024.5,143.5" fill="none" stroke="#2a6a80" stroke-width="0.9"/>
</svg>
</body></html>
